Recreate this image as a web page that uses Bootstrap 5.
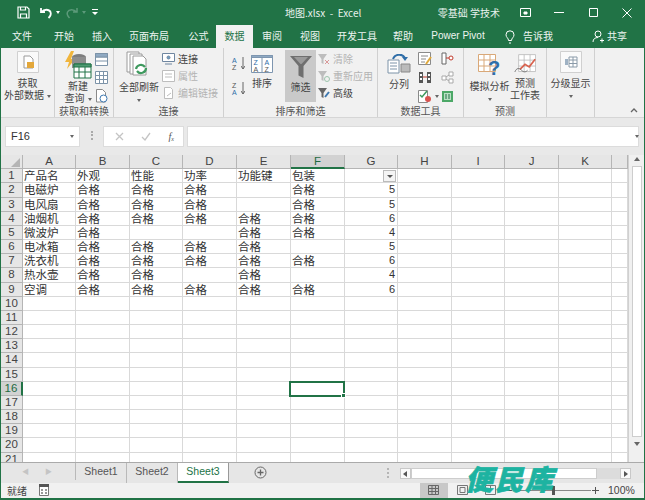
<!DOCTYPE html>
<html lang="zh-CN">
<head>
    <meta charset="UTF-8">
    <meta name="viewport" content="width=device-width, initial-scale=1.0">
    <title>地图.xlsx - Excel</title>
    <link href="https://cdn.jsdelivr.net/npm/bootstrap@5.3.0/dist/css/bootstrap.min.css" rel="stylesheet">
    <style>
        html, body { height: 100%; overflow: hidden; }
        body {
            background: #e6e6e6;
            color: #444;
            font-family: "Noto Sans CJK SC", "Liberation Sans", sans-serif;
            font-size: 10px;
        }
        svg { display: block; flex: none; }
        .xl-app { width: 645px; height: 500px; position: relative; border-bottom: 2px solid #217346; border-left: 1px solid #217346; border-right: 1px solid #217346; }
        .xl-abs { position: absolute; }

        /* title bar */
        .xl-title { height: 25px; background: #217346; color: #e8f1ec; padding: 0 0 0 16px; }
        .xl-title-name { position: absolute; left: 284px; top: 5px; font-size: 10px; line-height: 15px; }
        .xl-user { margin-left: auto; margin-right: 8px; font-size: 10px; }
        .xl-win { width: 34px; }
        .xl-caret { width: 0; height: 0; border: 2px solid transparent; border-top: 3px solid #666; border-bottom: 0; display: inline-block; vertical-align: middle; margin-left: 3px; }
        .xl-caret-w { border-top-color: #fff; }
        .xl-caret-g { border-top-color: #5c9a7a; }
        .xl-undo { margin-left: 9px; }
        .xl-redo { margin-left: 5px; }
        .xl-more { margin-left: 6px; }

        /* ribbon tabs */
        .xl-tabs { height: 23px; background: #217346; padding-left: 2px; }
        .xl-tabs .nav-link { color: #eef5f1; font-size: 10px; line-height: 22px; padding: 0; height: 23px; text-align: center; border-radius: 0; }
        .xl-tabs .nav-link.active { background: #f1f1f1; color: #217346; }
        .xl-t30 { width: 30px; } .xl-t35 { width: 35px; } .xl-t36 { width: 36px; } .xl-t37 { width: 37px; margin-left: 0; }
        .xl-t38 { width: 38px; } .xl-t46 { width: 46px; } .xl-t56 { width: 56px; } .xl-t64 { width: 64px; } .xl-t74 { width: 74px; }
        .xl-t74 .nav-link { font-family: "Liberation Sans", sans-serif; }
        .xl-tell { width: 60px; margin-left: 10px; }
        .xl-share { margin-left: 27px; gap: 3px; }

        /* ribbon */
        .xl-ribbon { height: 70px; background: #f1f1f1; border-bottom: 1px solid #d6d6d6; position: relative; font-size: 10px; line-height: 12px; }
        .xl-group { height: 69px; border-right: 1px solid #d0d0d0; position: relative; padding-top: 3px; flex: none; }
        .xl-g1 { width: 54px; }
        .xl-g2 { width: 59px; padding-left: 8px; }
        .xl-g3 { width: 110px; padding-left: 7px; }
        .xl-g4 { width: 154px; padding-left: 8px; }
        .xl-g5 { width: 86px; padding-left: 9px; }
        .xl-g6 { width: 83px; padding-left: 8px; }
        .xl-g7 { width: 48px; }
        .xl-group-name { position: absolute; left: 0; right: 0; bottom: 0; text-align: center; line-height: 13px; color: #555; }
        .xl-big { display: flex; flex-direction: column; align-items: center; text-align: center; flex: none; white-space: nowrap; }
        .xl-label { margin-top: 4px; }
        .xl-label-tight { margin-top: 1px; }
        .xl-small { display: flex; align-items: center; gap: 3px; height: 17px; white-space: nowrap; }
        .xl-stack { margin-top: -1px; }
        .xl-off { color: #b3b3b3; }
        .xl-filter { width: 31px; height: 52px; background: #c9c9c9; margin-left: 11px; margin-top: -1px; padding-top: 6px; }
        .xl-filter .xl-label { margin-top: 3px; }
        .xl-w30 { width: 30px; }
        .xl-w36 { width: 36px; }
        .xl-smallcol2 { gap: 5px; margin: 2px 0 0 2px; }
        .xl-conn { margin-left: 5px; }
        .xl-sortcol { gap: 11px; margin-top: 6px; width: 13px; font: 7px/7px "Liberation Sans", sans-serif; color: #555; }
        .xl-az { color: #2f6ea8; }
        .xl-sortbig { margin-left: 5px; width: 24px; padding-top: 4px; }
        .xl-adv { margin: -1px 0 0 2px; }
        .xl-splitbig { width: 24px; padding-top: 3px; }
        .xl-toolcol1 { gap: 6px; margin: 1px 0 0 7px; }
        .xl-toolcol2 { gap: 6px; margin: 1px 0 0 2px; }
        .xl-fcbig { width: 35px; padding-top: 3px; }
        .xl-fcbig2 { width: 36px; padding-top: 3px; }
        .xl-collapse { left: 629px; top: 60px; }

        /* formula bar */
        .xl-fbar { height: 37px; padding: 8px 5px 8px 4px; background: #e9e9e9; position: relative; }
        .xl-name { width: 75px; height: 21px; background: #fff; font: 11px/21px "Liberation Sans", sans-serif; color: #333; padding: 0 5px; border: 1px solid #dcdcdc; }
        .xl-fbtns { width: 81px; height: 21px; background: #fff; margin-left: 23px; padding: 0 9px 0 11px; border: 1px solid #dcdcdc; }
        .xl-fx { font: italic 10px/12px "Liberation Serif", serif; color: #555; }
        .xl-fx sub { font-size: 6px; }
        .xl-input.form-control { height: 21px; margin-left: 3px; border-radius: 0; border: 1px solid #dcdcdc; padding: 0; min-height: 0; flex: 1; }
        .xl-dots { left: 90px; top: 13px; width: 2px; height: 9px; border-left: 2px dotted #aaa; }
        .xl-fdrop { left: 631px; top: 17px; }

        /* sheet */
        .xl-sheetwrap { height: 307px; overflow: hidden; position: relative; }
        .xl-sheet {
            display: grid;
            grid-template-columns: 22px 53px 54px 53px 54px 54px 54px 53px 54px 53px 54px 53px 16px;
            grid-auto-rows: 14.18px;
            width: 627px;
            background: #fff;
        }
        .xl-cell { border-right: 1px solid #d9d9d9; border-bottom: 1px solid #d9d9d9; font-size: 11.5px; line-height: 13px; color: #333; padding-left: 1px; white-space: nowrap; position: relative; overflow: visible; }
        .xl-num { text-align: right; padding: 0 2px 0 0; font-family: "Liberation Sans", sans-serif; font-size: 11px; }
        .xl-colh, .xl-rowh { background: #e6e6e6; color: #444; font: 11.5px/13px "Liberation Sans", sans-serif; text-align: center; padding: 0; border-color: #b5b5b5; }
        .xl-cur { background: #d2d2d2; color: #1f6b42; }
        .xl-colh.xl-cur { border-bottom: 2px solid #217346; }
        .xl-rowh.xl-cur { border-right: 2px solid #217346; }
        .xl-selected { outline: 2px solid #217346; outline-offset: -1px; z-index: 2; transform: translateX(-1px); }
        .xl-selected::after { content: ""; position: absolute; right: -3px; bottom: -3px; width: 5px; height: 5px; background: #217346; border: 1px solid #fff; }
        .xl-corner { position: absolute; right: 2px; bottom: 1px; width: 0; height: 0; border-left: 9px solid transparent; border-bottom: 9px solid #b5b5b5; }
        .xl-filterbtn { position: absolute; right: 1px; top: 1px; width: 13px; height: 12px; background: #f4f4f4; border: 1px solid #bbb; }
        .xl-filterbtn::after { content: ""; position: absolute; left: 3px; top: 4px; border: 3px solid transparent; border-top: 3px solid #555; border-bottom: 0; }

        .xl-vscroll { position: absolute; left: 627px; top: 0; width: 17px; height: 307px; background: #f0f0f0; border-left: 1px solid #d0d0d0; }
        .xl-vthumb { position: absolute; left: 3px; top: 11px; width: 10px; height: 271px; background: #fff; border: 1px solid #cdcdcd; }
        .xl-varrow { position: absolute; left: 5px; border: 3px solid transparent; }
        .xl-vup { top: 2px; border-bottom: 4px solid #666; border-top: 0; }
        .xl-vdown { top: 287px; border-top: 4px solid #666; border-bottom: 0; }

        /* sheet tabs */
        .xl-tabbar { height: 21px; background: #e6e6e6; border-top: 1px solid #aaa; position: relative; }
        .xl-nav { width: 75px; padding-left: 21px; gap: 16px; color: #c4c4c4; font-size: 7px; border-right: 1px solid #b9b9b9; height: 17px; }
        .xl-sheettab { width: 51px; height: 20px; font: 10.5px/17px "Liberation Sans", sans-serif; text-align: center; color: #555; border-right: 1px solid #b9b9b9; }
        .xl-sheettab.xl-on { background: #fff; color: #217346; border-bottom: 2px solid #217346; border-right: 1px solid #999; }
        .xl-plus { left: 253px; top: 3px; }
        .xl-hscroll { position: absolute; left: 399px; top: 5px; width: 231px; height: 11px; background: #dcdcdc; display: flex; }
        .xl-hbtn { width: 11px; height: 11px; background: #fafafa; border: 1px solid #c8c8c8; position: relative; }
        .xl-hthumb { width: 186px; background: #fff; border: 1px solid #cdcdcd; }
        .xl-hleft { left: 2px; top: 2px; border: 3px solid transparent; border-right: 4px solid #555; border-left: 0; }
        .xl-hright { left: 3px; top: 2px; border: 3px solid transparent; border-left: 4px solid #555; border-right: 0; }
        .xl-grip { position: absolute; left: 386px; top: 5px; height: 10px; border-left: 2px dotted #b5b5b5; }

        /* status bar */
        .xl-status { height: 15px; background: #f1f1f1; padding-left: 6px; font-size: 10px; line-height: 15px; position: relative; }
        .xl-macro { left: 38px; top: 1px; }
        .xl-view { position: absolute; left: 419px; top: 0; width: 28px; height: 15px; background: #c8c8c8; }
        .xl-v1 { left: 427px; top: 2px; }
        .xl-v2 { left: 456px; top: 2px; }
        .xl-v3 { left: 484px; top: 2px; }
        .xl-minus { left: 506px; top: 7px; width: 5px; height: 1px; background: #555; }
        .xl-slider { left: 514px; top: 7px; width: 76px; height: 1px; background: #888; }
        .xl-knob { left: 551px; top: 3px; width: 3px; height: 9px; background: #555; }
        .xl-zplus { left: 591px; top: 4px; }
        .xl-zoom { left: 607px; top: 0; font: 10.5px/15px "Liberation Sans", sans-serif; color: #444; }

        .xl-stamp {
            position: absolute; left: 464px; top: 461px;
            font: italic 900 28px/34px "Noto Sans CJK SC", sans-serif;
            -webkit-text-stroke: .7px #1db3a1;
            color: #1db3a1; letter-spacing: 2px; z-index: 5;
        }
    </style>
</head>
<body>
<div class="xl-app">

    <div class="xl-title d-flex align-items-center">
        <svg width="13" height="13" viewBox="0 0 13 13" fill="none" stroke="#fff" stroke-width="1.2"><path d="M1 1h9l2 2v9H1zM3.500 12V8h6v4M3.500 1v3h5V1"/></svg>
        <svg class="xl-undo" width="14" height="12" viewBox="0 0 14 12" fill="none" stroke="#fff" stroke-width="1.800"><path d="M2 1v4h4M2.500 5C5 2 10 2 11.500 5c1 2.500-.5 4.500-2 6"/></svg>
        <span class="xl-caret xl-caret-w"></span>
        <svg class="xl-redo" width="14" height="12" viewBox="0 0 14 12" fill="none" stroke="#5c9a7a" stroke-width="1.500"><path d="M12 1v4H8M11.500 5C9 2 4 2 2.500 5c-1 2.500.5 4.500 2 6"/></svg>
        <span class="xl-caret xl-caret-g"></span>
        <svg class="xl-more" width="6" height="7" viewBox="0 0 6 7" fill="#fff"><path d="M0 0h6v1H0zM0 3l3 3 3-3z"/></svg>
        <div class="xl-title-name">地图.xlsx&nbsp; -&nbsp; Excel</div>
        <div class="xl-user">零基础 学技术</div>
        <div class="xl-win d-flex justify-content-center"><svg width="11" height="9" viewBox="0 0 11 9" fill="none" stroke="#fff"><path d="M.5.500h10v8H.5z"/><path d="M4 4h3v2H4z" fill="#fff"/></svg></div>
        <div class="xl-win d-flex justify-content-center"><svg width="10" height="2" viewBox="0 0 10 2"><path d="M0 .5h10" stroke="#fff"/></svg></div>
        <div class="xl-win d-flex justify-content-center"><svg width="9" height="9" viewBox="0 0 9 9" fill="none" stroke="#fff"><path d="M.5.500h8v8h-8z"/></svg></div>
        <div class="xl-win d-flex justify-content-center"><svg width="10" height="10" viewBox="0 0 10 10" stroke="#fff"><path d="M.5.500l9 9M9.500.500l-9 9"/></svg></div>
    </div>

    <ul class="xl-tabs nav flex-nowrap">
        <li class="nav-item xl-t38"><a class="nav-link" href="#">文件</a></li>
        <li class="nav-item xl-t46"><a class="nav-link" href="#">开始</a></li>
        <li class="nav-item xl-t30"><a class="nav-link" href="#">插入</a></li>
        <li class="nav-item xl-t64"><a class="nav-link" href="#">页面布局</a></li>
        <li class="nav-item xl-t35"><a class="nav-link" href="#">公式</a></li>
        <li class="nav-item xl-t37"><a class="nav-link active" href="#">数据</a></li>
        <li class="nav-item xl-t38"><a class="nav-link" href="#">审阅</a></li>
        <li class="nav-item xl-t38"><a class="nav-link" href="#">视图</a></li>
        <li class="nav-item xl-t56"><a class="nav-link" href="#">开发工具</a></li>
        <li class="nav-item xl-t36"><a class="nav-link" href="#">帮助</a></li>
        <li class="nav-item xl-t74"><a class="nav-link" href="#">Power Pivot</a></li>
        <li class="nav-item xl-tell d-flex align-items-center">
            <svg width="10" height="14" viewBox="0 0 10 14" fill="none" stroke="#fff"><path d="M3.500 10.500C3.500 8 1 7.500 1 4.800a4 4 0 0 1 8 0c0 2.700-2.500 3.200-2.500 5.700zM4 13h2"/></svg>
            <a class="nav-link ms-2" href="#">告诉我</a>
        </li>
        <li class="nav-item xl-share d-flex align-items-center">
            <svg width="12" height="13" viewBox="0 0 12 13" fill="none" stroke="#fff"><circle cx="6" cy="4" r="3"/><path d="M1 12c0-3 2-4.500 5-4.500M8 10.500h4M10 8.500v4"/></svg>
            <a class="nav-link" href="#">共享</a>
        </li>
    </ul>

    <div class="xl-ribbon d-flex">
        <!-- 获取外部数据 -->
        <div class="xl-group xl-g1 d-flex justify-content-center">
            <div class="xl-big">
                <svg width="22" height="22" viewBox="0 0 22 22"><path d="M.5.500h21v21H.5z" fill="#fafafa" stroke="#d0d0d0"/><path d="M7 5h6l3 3v9H7z" fill="#fff" stroke="#9a9a9a"/><path d="M10 11h7v6h-7z" fill="#e3a73a"/></svg>
                <div class="xl-label">获取<br>外部数据<span class="xl-caret"></span></div>
            </div>
        </div>
        <!-- 获取和转换 -->
        <div class="xl-group xl-g2 d-flex">
            <div class="xl-big xl-w30">
                <svg width="28" height="28" viewBox="0 0 28 28"><path d="M7 0 1 11h4l-2 7 8-10H7l3-8z" fill="#f0b53c"/><ellipse cx="15" cy="6" rx="7" ry="3" fill="#7e7e7e"/><path d="M8 6h14v11H8z" fill="#8e8e8e"/><path d="M10 13h17v14H10z" fill="#fff" stroke="#217346"/><path d="M10 13h17v3H10zM15 16v11M21 16v11M10 21h17" fill="#4f9a72" stroke="#217346"/></svg>
                <div class="xl-label-tight">新建<br>查询<span class="xl-caret"></span></div>
            </div>
            <div class="xl-smallcol2 d-flex flex-column">
                <svg width="13" height="13" viewBox="0 0 13 13" fill="#fff" stroke="#7c93a8"><path d="M.5.500h12v12H.5zM.5 4h12M.5 8h12"/><path d="M.5.500h12V4H.500z" fill="#8fa9c2"/></svg>
                <svg width="13" height="13" viewBox="0 0 13 13" fill="#fff" stroke="#7c93a8"><path d="M.5.500h12v12H.5zM.5 4.500h12M.5 8.500h12M4.500.500v12M8.500.500v12"/></svg>
                <svg width="13" height="14" viewBox="0 0 13 14" fill="#fff" stroke="#8a8a8a"><path d="M1.500.500h6l3 3V13h-9z"/><circle cx="8.500" cy="9.500" r="3.500" stroke="#3d78b0"/></svg>
            </div>
            <div class="xl-group-name">获取和转换</div>
        </div>
        <!-- 连接 -->
        <div class="xl-group xl-g3 d-flex">
            <div class="xl-big xl-w36">
                <svg width="26" height="26" viewBox="0 0 26 26" fill="#fff" stroke="#9a9a9a"><path d="M1 1h12v20H1z"/><path d="M4 3h12v20H4z"/><path d="M7 5h10l3 3v16H7z"/><path d="M10 18a5 5 0 0 1 9-2M20 17a5 5 0 0 1-9 3" fill="none" stroke="#3f9a5f" stroke-width="2.200"/></svg>
                <div class="xl-label">全部刷新<br><span class="xl-caret m-0"></span></div>
            </div>
            <div class="xl-conn xl-stack">
                <div class="xl-small"><svg width="13" height="12" viewBox="0 0 13 12" fill="#fff" stroke="#6f86a0"><path d="M.5.500h12v8H.5zM3 11h7"/><circle cx="6.500" cy="4.500" r="1.500" fill="#6f9ec4"/></svg>连接</div>
                <div class="xl-small xl-off"><svg width="13" height="12" viewBox="0 0 13 12" fill="#fff" stroke="#bdbdbd"><path d="M.5.500h12v11H.5zM3 4h7M3 7h7"/></svg>属性</div>
                <div class="xl-small xl-off"><svg width="13" height="12" viewBox="0 0 13 12" fill="#fff" stroke="#bdbdbd"><path d="M2.500.500h6l2 2v9h-8zM5 9l4-3"/></svg>编辑链接</div>
            </div>
            <div class="xl-group-name">连接</div>
        </div>
        <!-- 排序和筛选 -->
        <div class="xl-group xl-g4 d-flex">
            <div class="xl-sortcol d-flex flex-column">
                <div class="d-flex"><div><span class="xl-az">A</span><br>Z</div><svg class="ms-1" width="4" height="13" viewBox="0 0 4 13"><path d="M2 0v12M0 9l2 3 2-3" fill="none" stroke="#666"/></svg></div>
                <div class="d-flex"><div>Z<br><span class="xl-az">A</span></div><svg class="ms-1" width="4" height="13" viewBox="0 0 4 13"><path d="M2 0v12M0 9l2 3 2-3" fill="none" stroke="#666"/></svg></div>
            </div>
            <div class="xl-big xl-sortbig">
                <svg width="22" height="18" viewBox="0 0 22 18" fill="#fff" stroke="#7e96b0"><path d="M.5.500h21v17H.5z"/><path d="M.5.500h21v2H.5z" fill="#8fa9c2"/><path d="M11 2.500v15"/><text x="2.500" y="10" font-size="7" font-family="Liberation Sans" fill="#2f6ea8" stroke="none">Z</text><text x="13.500" y="10" font-size="7" font-family="Liberation Sans" fill="#2f6ea8" stroke="none">A</text><text x="2.500" y="16.500" font-size="7" font-family="Liberation Sans" fill="#555" stroke="none">A</text><text x="13.500" y="16.500" font-size="7" font-family="Liberation Sans" fill="#555" stroke="none">Z</text></svg>
                <div class="xl-label">排序</div>
            </div>
            <div class="xl-filter xl-big">
                <svg width="22" height="22" viewBox="0 0 22 22"><path d="M0 0h22L13.500 10v12l-5-2.500V10z" fill="#6f6f6f"/><path d="M4 1h14l-6.500 7h-1z" fill="#9a9a9a"/></svg>
                <div class="xl-label">筛选</div>
            </div>
            <div class="xl-adv">
                <div class="xl-small xl-off"><svg width="12" height="12" viewBox="0 0 12 12"><path d="M0 1h9L5.500 6v5l-2-1V6z" fill="#bdbdbd"/><path d="M7 7l4 4M11 7l-4 4" stroke="#d99a9a"/></svg>清除</div>
                <div class="xl-small xl-off"><svg width="12" height="12" viewBox="0 0 12 12"><path d="M0 1h9L5.500 6v5l-2-1V6z" fill="#bdbdbd"/><circle cx="9" cy="9" r="2.500" fill="none" stroke="#9cc4ac"/></svg>重新应用</div>
                <div class="xl-small"><svg width="12" height="12" viewBox="0 0 12 12"><path d="M0 1h9L5.500 6v5l-2-1V6z" fill="#666"/><path d="M7 10l4-5" stroke="#3d78b0" stroke-width="2"/></svg>高级</div>
            </div>
            <div class="xl-group-name">排序和筛选</div>
        </div>
        <!-- 数据工具 -->
        <div class="xl-group xl-g5 d-flex">
            <div class="xl-big xl-splitbig">
                <svg width="24" height="20" viewBox="0 4 24 20"><path d="M1 10h11v13H1z" fill="#fff" stroke="#7c93a8"/><path d="M3 13h7M3 16h7M3 19h7" stroke="#7c93a8"/><path d="M14 14h9v8h-9z" fill="#bbb" stroke="#888"/><path d="M6 9C8 4 15 3 18 8" fill="none" stroke="#2f6ea8" stroke-width="2"/><path d="M15 7h6l-3 4z" fill="#2f6ea8"/></svg>
                <div class="xl-label">分列</div>
            </div>
            <div class="xl-toolcol1 d-flex flex-column">
                <svg width="14" height="13" viewBox="0 0 14 13" fill="#fff" stroke="#8a8a8a"><path d="M.5.500h12v12H.5zM3 4h7M3 7h5M3 10h4"/><path d="M8 12l5-7" stroke="#e0a93b" stroke-width="2"/></svg>
                <svg width="14" height="13" viewBox="0 0 14 13" fill="#555"><path d="M1 1h4v11H1zM9 1h4v11H9z"/><path d="M5 6h4" stroke="#c0392b"/><path d="M2 3h2v2H2zM10 3h2v2h-2zM2 7h2v2H2zM10 7h2v2h-2z" fill="#fff"/></svg>
                <div class="d-flex align-items-center"><svg width="14" height="13" viewBox="0 0 14 13" fill="#fff" stroke="#8a8a8a"><path d="M.5.500h9v12h-9z"/><path d="M2 5l2 2 5-6" stroke="#3f9a5f" stroke-width="1.500"/><circle cx="10" cy="9" r="3" fill="#d9534f" stroke="none"/></svg><span class="xl-caret"></span></div>
            </div>
            <div class="xl-toolcol2 d-flex flex-column">
                <svg width="13" height="13" viewBox="0 0 13 13" fill="#fff"><path d="M1 1h4v11H1z" stroke="#666"/><path d="M5 6h3" stroke="#c0392b"/><circle cx="10" cy="6" r="2" stroke="#c0392b"/></svg>
                <svg width="13" height="13" viewBox="0 0 13 13" fill="#fff" stroke="#a9a9a9"><path d="M1 5h4v4H1zM8 1h4v4H8zM8 8h4v4H8zM5 6l3-2M5 8l3 2"/></svg>
                <svg width="13" height="13" viewBox="0 0 13 13"><path d="M1 1h11v11H1z" fill="#4ca867"/><path d="M3 3h7v7H3z" fill="#b9e0c4"/><path d="M5 4v5M8 4v5" stroke="#217346"/></svg>
            </div>
            <div class="xl-group-name">数据工具</div>
        </div>
        <!-- 预测 -->
        <div class="xl-group xl-g6 d-flex">
            <div class="xl-big xl-fcbig">
                <svg width="24" height="22" viewBox="0 0 24 22" fill="#fff"><path d="M.5.500h17v17H.5zM.5 6h17M.5 12h17M6 .500v17M12 .500v17" stroke="#d9a878"/><text x="10" y="21" font-size="20" font-weight="700" font-family="Liberation Sans" fill="#2f6ea8">?</text></svg>
                <div class="xl-label">模拟分析<br><span class="xl-caret m-0"></span></div>
            </div>
            <div class="xl-big xl-fcbig2">
                <svg width="22" height="19" viewBox="0 0 26 22" fill="#fff"><path d="M5.500.500h20v20h-20zM5.500 7h20M5.500 14h20M12 .500v20M19 .500v20" stroke="#bbb"/><path d="M7 18l6-6 5 3 7-9" fill="none" stroke="#d9634f" stroke-width="2"/><path d="M1 21c2-5 5-5 8-2 3 3 5 2 7 0" fill="none" stroke="#666"/></svg>
                <div class="xl-label">预测<br>工作表</div>
            </div>
            <div class="xl-group-name">预测</div>
        </div>
        <!-- 分级显示 -->
        <div class="xl-group xl-g7 d-flex justify-content-center">
            <div class="xl-big">
                <svg width="22" height="22" viewBox="0 0 22 22"><path d="M.5.500h21v21H.5z" fill="#fafafa" stroke="#d0d0d0"/><path d="M9 6h8v10H9zM9 9h8M9 12.500h8M13 6v10" fill="#fff" stroke="#8a9aa8"/><path d="M5 8h3v6H5z" fill="#9fb2c4"/></svg>
                <div class="xl-label">分级显示<br><span class="xl-caret m-0"></span></div>
            </div>
        </div>
        <svg class="xl-abs xl-collapse" width="8" height="5" viewBox="0 0 8 5" fill="none" stroke="#666" stroke-width="1.300"><path d="M1 4l3-3 3 3"/></svg>
    </div>

    <div class="xl-fbar d-flex">
        <div class="xl-name d-flex justify-content-between align-items-center">F16<span class="xl-caret"></span></div>
        <div class="xl-abs xl-dots"></div>
        <div class="xl-fbtns d-flex align-items-center justify-content-between">
            <svg width="9" height="9" viewBox="0 0 9 9" stroke="#c4c4c4" stroke-width="1.300"><path d="M1 1l7 7M8 1L1 8"/></svg>
            <svg width="10" height="9" viewBox="0 0 10 9" fill="none" stroke="#c4c4c4" stroke-width="1.300"><path d="M1 5l3 3 5-7"/></svg>
            <span class="xl-fx">f<sub>x</sub></span>
        </div>
        <input class="xl-input form-control" type="text" aria-label="编辑栏">
        <span class="xl-caret xl-abs xl-fdrop"></span>
    </div>

    <div class="xl-sheetwrap">
        <div class="xl-sheet" id="sheet"></div>
        <div class="xl-vscroll">
            <span class="xl-varrow xl-vup"></span>
            <div class="xl-vthumb"></div>
            <span class="xl-varrow xl-vdown"></span>
        </div>
    </div>

    <div class="xl-tabbar d-flex">
        <div class="xl-nav d-flex align-items-center"><span>◀</span><span>▶</span></div>
        <div class="xl-sheettab">Sheet1</div>
        <div class="xl-sheettab">Sheet2</div>
        <div class="xl-sheettab xl-on">Sheet3</div>
        <svg class="xl-abs xl-plus" width="13" height="13" viewBox="0 0 13 13" fill="none" stroke="#666"><circle cx="6.500" cy="6.500" r="5.500"/><path d="M3.500 6.500h6M6.500 3.500v6" stroke-width="1.300"/></svg>
        <div class="xl-grip"></div>
        <div class="xl-hscroll">
            <div class="xl-hbtn"><span class="xl-abs xl-hleft"></span></div>
            <div class="xl-hthumb"></div>
            <div class="xl-hbtn ms-auto"><span class="xl-abs xl-hright"></span></div>
        </div>
    </div>

    <div class="xl-status">
        就绪
        <svg class="xl-abs xl-macro" width="10" height="12" viewBox="0 0 10 12"><path d="M.5 2.500h9v9h-9z" fill="#fff" stroke="#777"/><path d="M0 0h10v3H0z" fill="#555"/><path d="M2 5h2v2H2zM6 5h2v2H6zM2 8h2v2H2zM6 8h2v2H6z" fill="#999"/></svg>
        <div class="xl-view"></div>
        <svg class="xl-abs xl-v1" width="11" height="10" viewBox="0 0 11 10" fill="none" stroke="#666"><path d="M.5.500h10v9H.5zM.5 3.500h10M.5 6.500h10M4 .500v9M7.500.500v9"/></svg>
        <svg class="xl-abs xl-v2" width="11" height="10" viewBox="0 0 11 10" fill="none" stroke="#777"><path d="M.5.500h10v9H.5zM3 2.500h5v5H3z"/></svg>
        <svg class="xl-abs xl-v3" width="11" height="10" viewBox="0 0 11 10" fill="none" stroke="#777"><path d="M.5.500h10v9H.5zM.5 5h5V.500"/></svg>
        <div class="xl-abs xl-minus"></div>
        <div class="xl-abs xl-slider"></div>
        <div class="xl-abs xl-knob"></div>
        <svg class="xl-abs xl-zplus" width="7" height="7" viewBox="0 0 7 7" stroke="#555"><path d="M0 3.500h7M3.500 0v7"/></svg>
        <div class="xl-abs xl-zoom">100%</div>
    </div>

    <div class="xl-stamp">便民库</div>
</div>

<script>
    const cols = ["A","B","C","D","E","F","G","H","I","J","K"];
    const ok = "合格";
    const rows = {
        1: ["产品名","外观","性能","功率","功能键","包装",""],
        2: ["电磁炉",ok,ok,ok,"",ok,5],
        3: ["电风扇",ok,ok,ok,"",ok,5],
        4: ["油烟机",ok,ok,ok,ok,ok,6],
        5: ["微波炉",ok,"","",ok,ok,4],
        6: ["电冰箱",ok,ok,ok,ok,"",5],
        7: ["洗衣机",ok,ok,ok,ok,ok,6],
        8: ["热水壶",ok,ok,"",ok,"",4],
        9: ["空调",ok,ok,ok,ok,ok,6]
    };
    const sheet = document.getElementById("sheet");
    function cell(cls, text) {
        const d = document.createElement("div");
        d.className = "xl-cell " + cls;
        d.textContent = text;
        sheet.appendChild(d);
        return d;
    }
    cell("xl-colh", "").innerHTML = '<span class="xl-corner"></span>';
    cols.concat([""]).forEach(c => cell("xl-colh" + (c === "F" ? " xl-cur" : ""), c));
    for (let r = 1; r <= 21; r++) {
        cell("xl-rowh" + (r === 16 ? " xl-cur" : ""), r);
        const data = rows[r] || [];
        cols.concat([""]).forEach((c, i) => {
            const v = data[i] === undefined ? "" : data[i];
            let cls = typeof v === "number" ? "xl-num" : "";
            if (r === 16 && c === "F") cls += " xl-selected";
            const d = cell(cls, v);
            if (r === 1 && c === "G") d.innerHTML = '<span class="xl-filterbtn"></span>';
        });
    }
</script>
<script src="https://cdn.jsdelivr.net/npm/bootstrap@5.3.0/dist/js/bootstrap.bundle.min.js"></script>
</body>
</html>
